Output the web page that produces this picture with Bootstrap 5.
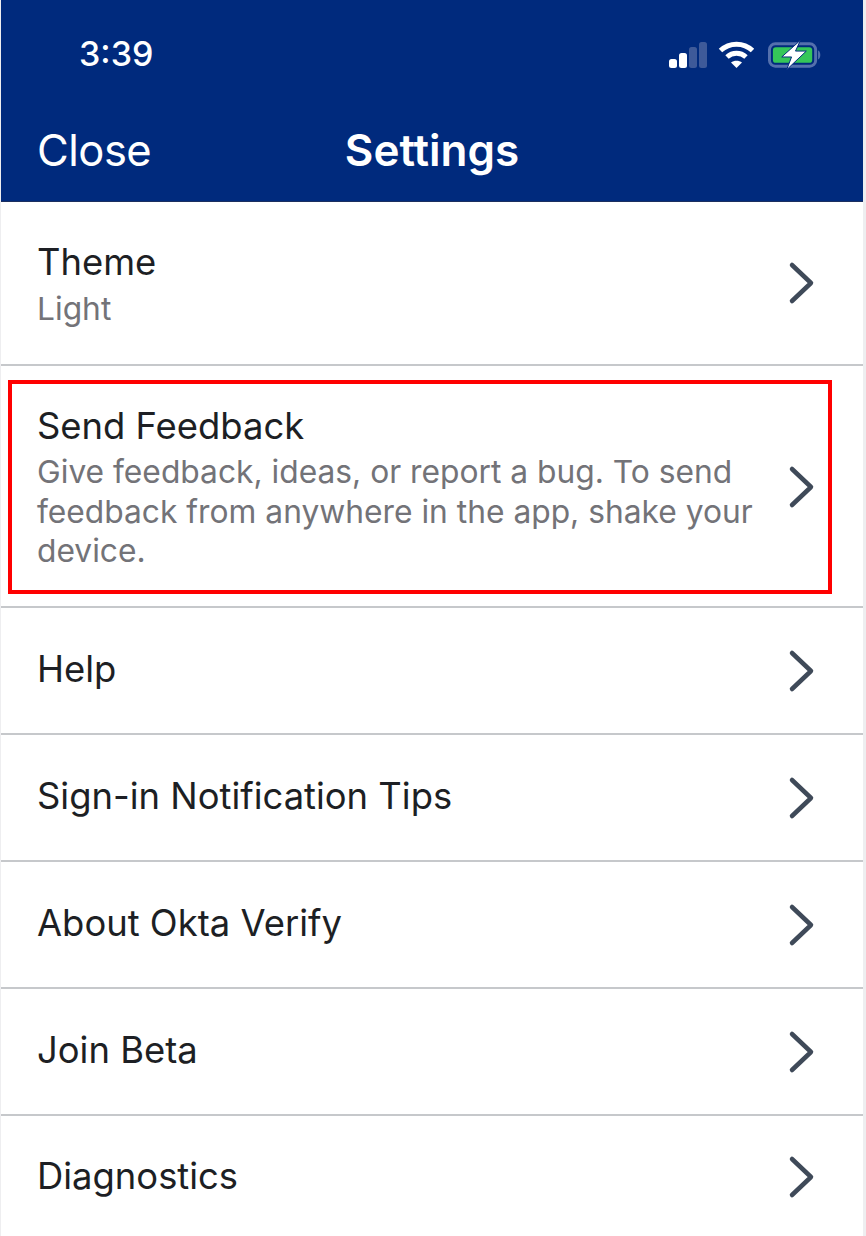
<!DOCTYPE html>
<html lang="en">

<head>
    <meta charset="UTF-8" />
    <meta name="viewport" content="width=device-width, initial-scale=1.0" />
    <title>Settings</title>
    <link href="https://cdn.jsdelivr.net/npm/bootstrap@5.3.7/dist/css/bootstrap.min.css" rel="stylesheet" />
    <script src="https://cdn.jsdelivr.net/npm/bootstrap@5.3.7/dist/js/bootstrap.bundle.min.js"></script>
    <style>
        html, body { height: 1236px; overflow: hidden; }
        body { background: #eeeef0; font-family: Inter, "Liberation Sans", sans-serif; color: #1d1f24; }
        .phone { width: 862px; height: 1236px; margin-left: 1px; background: #fff; position: relative; overflow: hidden; }
        .top-bar { height: 202px; background: #002a7d; color: #fff; border-bottom: 1px solid #1c2f5f; }
        .status-row { height: 104px; padding: 22px 40px 0 78px; }
        .clock { font-size: 34px; font-weight: 500; line-height: 64px; }
        .status-icons { padding-top: 18px; }
        .ico-wifi { margin-left: 11px; }
        .ico-batt { margin-left: 13px; }
        .title-row { height: 97px; padding: 0 36px; position: relative; }
        .close-txt { font-size: 43.5px; font-weight: 400; line-height: 92px; letter-spacing: -.5px; }
        .title-txt { font-size: 44px; font-weight: 600; line-height: 92px; position: absolute; left: 0; right: 0; top: 0; text-align: center; }
        .set-row { border-bottom: 2px solid #c6c8cb; padding-left: 36px; padding-right: 47px; }
        .row-a { height: 164px; padding-top: 38px; }
        .row-b { height: 242px; padding-top: 38px; }
        .row-c { height: 127px; }
        .row-last { height: 122px; border-bottom: 0; }
        .row-label { font-size: 36.4px; line-height: 44px; }
        .row-c .row-label, .row-last .row-label { margin-bottom: 3px; }
        .row-sub { font-size: 31.75px; line-height: 39.5px; color: #737378; margin-top: 4px; max-width: 730px; }
        .row-a .row-sub { margin-top: 5px; }
        .chev { width: 28px; height: 44px; flex: none; }
        .row-a .chev { margin-top: 21px; }
        .row-b .chev { margin-top: 61px; }
        .red-box { position: absolute; left: 7px; top: 380px; width: 824px; height: 214px; border: 4px solid #f00; }
    </style>
</head>

<body>
    <div class="phone">
        <div class="top-bar">
            <div class="status-row d-flex justify-content-between align-items-start">
                <div class="clock">3:39</div>
                <div class="status-icons d-flex align-items-center">
                    <svg width="38" height="28" viewBox="0 0 38 28">
                        <rect x="0" y="18" width="8" height="9" rx="2.5" fill="#fff" />
                        <rect x="10" y="12" width="8" height="15" rx="2.5" fill="#fff" />
                        <rect x="20" y="6" width="8" height="21" rx="2.5" fill="#3e5a99" />
                        <rect x="30" y="1" width="8" height="26" rx="2.5" fill="#3e5a99" />
                    </svg>
                    <svg class="ico-wifi" width="37" height="28" viewBox="0 0 36 28" fill="none" stroke="#fff" stroke-width="5">
                        <path d="M2 9.5C11 1 25 1 34 9.500" />
                        <path d="M8.500 16C14 11 22 11 27.500 16" />
                        <path d="M18 27l-5.500-5.500C15.500 19 20.500 19 23.500 21.500z" fill="#fff" stroke="none" />
                    </svg>
                    <svg class="ico-batt" width="55" height="30" viewBox="0 0 56 30">
                        <rect x="1.500" y="3.500" width="47" height="23" rx="6" fill="none" stroke="#5470ad" stroke-width="3" />
                        <rect x="5" y="7" width="40" height="16" rx="3" fill="#35c759" />
                        <path d="M51 10.500c3 1 3 8 0 9z" fill="#5470ad" />
                        <path d="M33 0L14 17h10l-5 13 20-19H28z" fill="#fff" stroke="#002a7d" stroke-width="1" />
                    </svg>
                </div>
            </div>
            <div class="title-row">
                <span class="close-txt">Close</span>
                <div class="title-txt">Settings</div>
            </div>
        </div>

        <div class="set-row row-a d-flex justify-content-between">
            <div>
                <div class="row-label">Theme</div>
                <div class="row-sub">Light</div>
            </div>
            <svg class="chev" viewBox="0 0 28 44"><path d="M4 4l19 18L4 40" fill="none" stroke="#3f4a59" stroke-width="4.500" stroke-linecap="round" stroke-linejoin="round" /></svg>
        </div>
        <div class="set-row row-b d-flex justify-content-between">
            <div>
                <div class="row-label">Send Feedback</div>
                <div class="row-sub">Give feedback, ideas, or report a bug. To send feedback from anywhere in the app, shake your device.</div>
            </div>
            <svg class="chev" viewBox="0 0 28 44"><path d="M4 4l19 18L4 40" fill="none" stroke="#3f4a59" stroke-width="4.500" stroke-linecap="round" stroke-linejoin="round" /></svg>
        </div>
        <div class="set-row row-c d-flex justify-content-between align-items-center">
            <div class="row-label">Help</div>
            <svg class="chev" viewBox="0 0 28 44"><path d="M4 4l19 18L4 40" fill="none" stroke="#3f4a59" stroke-width="4.500" stroke-linecap="round" stroke-linejoin="round" /></svg>
        </div>
        <div class="set-row row-c d-flex justify-content-between align-items-center">
            <div class="row-label">Sign-in Notification Tips</div>
            <svg class="chev" viewBox="0 0 28 44"><path d="M4 4l19 18L4 40" fill="none" stroke="#3f4a59" stroke-width="4.500" stroke-linecap="round" stroke-linejoin="round" /></svg>
        </div>
        <div class="set-row row-c d-flex justify-content-between align-items-center">
            <div class="row-label">About Okta Verify</div>
            <svg class="chev" viewBox="0 0 28 44"><path d="M4 4l19 18L4 40" fill="none" stroke="#3f4a59" stroke-width="4.500" stroke-linecap="round" stroke-linejoin="round" /></svg>
        </div>
        <div class="set-row row-c d-flex justify-content-between align-items-center">
            <div class="row-label">Join Beta</div>
            <svg class="chev" viewBox="0 0 28 44"><path d="M4 4l19 18L4 40" fill="none" stroke="#3f4a59" stroke-width="4.500" stroke-linecap="round" stroke-linejoin="round" /></svg>
        </div>
        <div class="set-row row-last d-flex justify-content-between align-items-center">
            <div class="row-label">Diagnostics</div>
            <svg class="chev" viewBox="0 0 28 44"><path d="M4 4l19 18L4 40" fill="none" stroke="#3f4a59" stroke-width="4.500" stroke-linecap="round" stroke-linejoin="round" /></svg>
        </div>

        <div class="red-box"></div>
    </div>
</body>

</html>
